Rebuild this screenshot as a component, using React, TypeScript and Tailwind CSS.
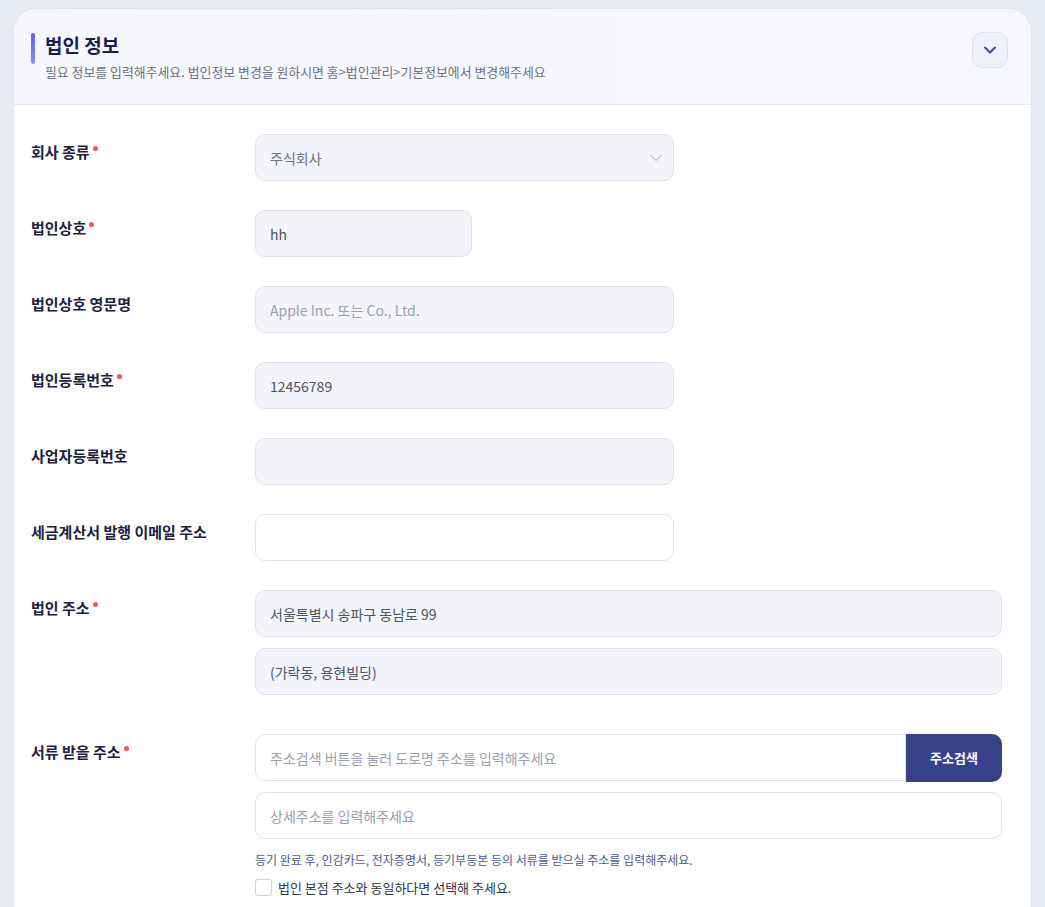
import { ChevronDown } from 'lucide-react';

type Field = {
  label: string;
  required?: boolean;
  value?: string;
  placeholder?: string;
  width: string;
  white?: boolean;
  select?: boolean;
};

const fields: Field[] = [
  { label: '회사 종류', required: true, value: '주식회사', width: 'w-[419px]', select: true },
  { label: '법인상호', required: true, value: 'hh', width: 'w-[217px]' },
  { label: '법인상호 영문명', placeholder: 'Apple Inc. 또는 Co., Ltd.', width: 'w-[419px]' },
  { label: '법인등록번호', required: true, value: '12456789', width: 'w-[419px]' },
  { label: '사업자등록번호', width: 'w-[419px]' },
  { label: '세금계산서 발행 이메일 주소', width: 'w-[419px]', white: true },
];

const Label = ({ text, required }: { text: string; required?: boolean }) => (
  <div className="w-[224px] shrink-0 pt-[8px] text-[15px] leading-5 font-bold text-[#1c2240]">
    {text}
    {required && <span className="ml-[3px] inline-block h-[5px] w-[5px] -translate-y-[7px] rounded-full bg-[#f0575d]" />}
  </div>
);

const Box = ({ children, className }: { children?: React.ReactNode; className: string }) => (
  <div className={`flex h-[47px] items-center rounded-[10px] border border-[#dfe3ef] px-[14px] text-sm ${className}`}>
    {children}
  </div>
);

export default function App() {
  return (
    <div className="min-h-screen bg-[#e7ebf6] px-[13px] pt-[8px] font-['Noto_Sans_CJK_KR','Noto_Sans',sans-serif]">
      <div className="min-h-[900px] rounded-t-[24px] border border-[#e2e6f2] bg-white">
        {/* Section header */}
        <div className="flex items-start justify-between rounded-t-[24px] border-b border-[#e4e7f1] bg-gradient-to-r from-[#f5f7fd] to-[#f7f8fd] pb-[22px] pl-[17px] pr-[23px] pt-[23px]">
          <div className="flex items-start gap-[10px]">
            <div className="mt-[1px] h-[31px] w-[4px] rounded-full bg-gradient-to-b from-[#5b5ff0] to-[#8b8ff8]" />
            <div>
              <h2 className="text-[19px] leading-[26px] font-bold text-[#1b1f4f]">법인 정보</h2>
              <p className="mt-[4px] text-[12.9px] leading-5 text-[#6b7185]">
                필요 정보를 입력해주세요. 법인정보 변경을 원하시면 홈&gt;법인관리&gt;기본정보에서 변경해주세요
              </p>
            </div>
          </div>
          <button className="flex h-[36px] w-[36px] items-center justify-center rounded-[10px] border border-[#dde2f4] bg-[#eef1fc]">
            <ChevronDown className="h-[20px] w-[20px] text-[#3b4789]" strokeWidth={2.3} />
          </button>
        </div>

        {/* Form body */}
        <div className="flex flex-col gap-[29px] pl-[17px] pr-[29px] pt-[29px]">
          {fields.map((f) => (
            <div key={f.label} className="flex">
              <Label text={f.label} required={f.required} />
              <Box className={`${f.width} ${f.white ? 'bg-white' : 'bg-[#f3f5fa]'} ${f.select ? 'justify-between' : ''}`}>
                {f.value && <span className={f.select ? 'text-[#6b7280]' : 'text-[#4b5363]'}>{f.value}</span>}
                {f.placeholder && <span className="text-[#9aa0ae]">{f.placeholder}</span>}
                {f.select && <ChevronDown className="-mr-[7px] h-[20px] w-[20px] text-[#a3a8b5]" strokeWidth={1.2} />}
              </Box>
            </div>
          ))}

          <div className="flex">
            <Label text="법인 주소" required />
            <div className="flex flex-1 flex-col gap-[11px]">
              <Box className="bg-[#f3f5fa] text-[#4b5363]">서울특별시 송파구 동남로 99</Box>
              <Box className="bg-[#f3f5fa] text-[#4b5363]">(가락동, 용현빌딩)</Box>
            </div>
          </div>

          <div className="mt-[10px] flex">
            <Label text="서류 받을 주소" required />
            <div className="flex flex-1 flex-col">
              <div className="flex">
                <Box className="flex-1 rounded-r-none bg-white text-[#9aa0ae]">
                  주소검색 버튼을 눌러 도로명 주소를 입력해주세요
                </Box>
                <button className="h-[48px] w-[96px] rounded-r-[10px] bg-[#374189] text-[13px] font-bold text-white">
                  주소검색
                </button>
              </div>
              <Box className="mt-[10px] bg-white text-[#9aa0ae]">상세주소를 입력해주세요</Box>
              <p className="mt-[11px] text-[12px] leading-5 text-[#4d5a8f]">
                등기 완료 후, 인감카드, 전자증명서, 등기부등본 등의 서류를 받으실 주소를 입력해주세요.
              </p>
              <label className="mt-[8px] flex items-center gap-[6px] text-[13px] text-[#2f3545]">
                <span className="h-[17px] w-[17px] rounded-[3px] border border-[#cfd3dc] bg-white" />
                법인 본점 주소와 동일하다면 선택해 주세요.
              </label>
            </div>
          </div>
        </div>
      </div>
    </div>
  );
}
